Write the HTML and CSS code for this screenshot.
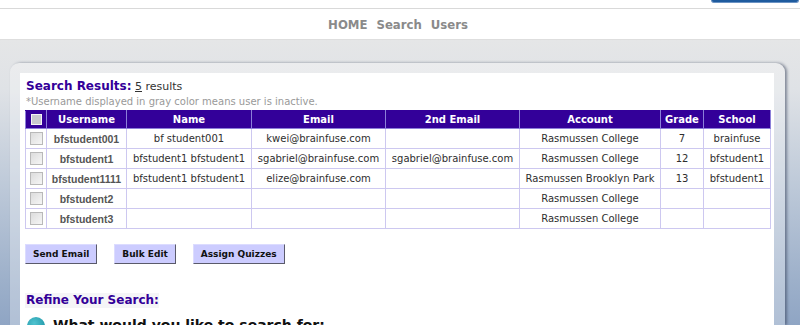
FILE: index.html
```html
<!DOCTYPE html>
<html>
<head>
<meta charset="utf-8">
<link rel="stylesheet" href="styles.css">
</head>
<body>
<div class="topbar"><div class="topbtn"></div></div>
<nav class="nav"><a>HOME</a><a>Search</a><a>Users</a></nav>
<main class="page">
  <section class="panel">
    <div class="inner">
      <div class="results-head"><span class="title">Search Results:</span> <span class="count">5</span> results</div>
      <p class="note">*Username displayed in gray color means user is inactive.</p>
      <table class="results">
        <colgroup>
          <col class="w-cb"><col class="w-user"><col class="w-name"><col class="w-email"><col class="w-email2"><col class="w-acct"><col class="w-grade"><col class="w-school">
        </colgroup>
        <thead>
          <tr><th><span class="cb-head"></span></th><th>Username</th><th>Name</th><th>Email</th><th>2nd Email</th><th>Account</th><th>Grade</th><th>School</th></tr>
        </thead>
        <tbody>
          <tr><td><span class="cb"></span></td><td class="user">bfstudent001</td><td>bf student001</td><td>kwei@brainfuse.com</td><td></td><td>Rasmussen College</td><td>7</td><td>brainfuse</td></tr>
          <tr><td><span class="cb"></span></td><td class="user">bfstudent1</td><td>bfstudent1 bfstudent1</td><td>sgabriel@brainfuse.com</td><td>sgabriel@brainfuse.com</td><td>Rasmussen College</td><td>12</td><td>bfstudent1</td></tr>
          <tr><td><span class="cb"></span></td><td class="user">bfstudent1111</td><td>bfstudent1 bfstudent1</td><td>elize@brainfuse.com</td><td></td><td>Rasmussen Brooklyn Park</td><td>13</td><td>bfstudent1</td></tr>
          <tr><td><span class="cb"></span></td><td class="user">bfstudent2</td><td></td><td></td><td></td><td>Rasmussen College</td><td></td><td></td></tr>
          <tr><td><span class="cb"></span></td><td class="user">bfstudent3</td><td></td><td></td><td></td><td>Rasmussen College</td><td></td><td></td></tr>
        </tbody>
      </table>
      <div class="actions">
        <button class="btn">Send Email</button>
        <button class="btn">Bulk Edit</button>
        <button class="btn">Assign Quizzes</button>
      </div>
      <h2 class="refine">Refine Your Search:</h2>
      <div class="step"><span class="step-icon"></span><span class="step-text">What would you like to search for:</span></div>
    </div>
  </section>
</main>
</body>
</html>
```
FILE: styles.css
```css
html, body {
  margin: 0;
  height: 325px;
  overflow: hidden;
}
body {
  font-family: "DejaVu Sans", Verdana, sans-serif;
  background: #fff;
  color: #333;
}
.topbar {
  height: 8px;
  border-bottom: 1px solid #d9d9d9;
  display: flex;
  justify-content: flex-end;
}
.topbtn {
  width: 86px;
  height: 2px;
  margin-right: 1px;
  background: #1e5b9e;
  border: 1px solid #6b93c4;
  border-top: 0;
  border-radius: 0 0 4px 4px;
}
.nav {
  height: 30px;
  border-bottom: 1px solid #dedede;
  display: flex;
  justify-content: center;
  align-items: center;
  gap: 9px;
  font: bold 13px "DejaVu Sans Condensed", "DejaVu Sans", sans-serif;
  color: #8a8a8a;
  padding-right: 4px;
}
.page {
  height: 285px;
  box-sizing: border-box;
  padding: 23px 15px 0 10px;
  background: linear-gradient(180deg, #e5e6e7 0px, #dfe2e6 50px, #bcc8d8 150px, #9db0ca 240px, #8fa5c4 285px);
}
.panel {
  height: 100%;
  box-sizing: border-box;
  padding: 10px 11px 0 10px;
  border-radius: 9px 9px 0 0;
  background: rgba(255, 255, 255, 0.3);
  box-shadow: 2px 0 3px rgba(50, 60, 85, 0.55);
}
.inner {
  height: 100%;
  box-sizing: border-box;
  background: #fff;
  padding: 6px 4px 0 5px;
}
.results-head {
  font-size: 11px;
  line-height: 15px;
  color: #333;
  padding-left: 1px;
}
.title {
  font-size: 12px;
  font-weight: bold;
  color: #330099;
}
.count {
  text-decoration: underline;
}
.note {
  margin: 2px 0 0;
  font-size: 10px;
  line-height: 12px;
  color: #999;
  padding-left: 1px;
}
.results {
  margin-top: 2px;
  width: 745px;
  table-layout: fixed;
  border-collapse: collapse;
  font-size: 10px;
  text-align: center;
}
.w-cb { width: 21px; }
.w-user { width: 80px; }
.w-name { width: 125px; }
.w-email { width: 134px; }
.w-email2 { width: 134px; }
.w-acct { width: 141px; }
.w-grade { width: 43px; }
.w-school { width: 67px; }
.results th {
  height: 17px;
  padding: 0;
  background: #330099;
  color: #fff;
  font-weight: bold;
  border: 1px solid #8c7fd9;
  border-top-color: #330099;
  white-space: nowrap;
}
.results td {
  height: 19px;
  padding: 0;
  border: 1px solid #cdc8f0;
  color: #2e2e2e;
  white-space: nowrap;
}
.results td.user {
  font: bold 10.5px "Liberation Sans", Arial, sans-serif;
  color: #555;
}
.cb-head {
  display: block;
  margin: 0 auto;
  width: 9px;
  height: 9px;
  border: 1px solid #f4f4f4;
  background: #c9c9cf;
}
.cb {
  display: block;
  margin: 0 auto;
  width: 11px;
  height: 11px;
  border: 1px solid #b9b9b9;
  background: linear-gradient(135deg, #dcdcdc, #f6f6f6);
}
.actions {
  margin-top: 15px;
  display: flex;
  gap: 17px;
}
.btn {
  height: 20px;
  padding: 0 7px;
  background: #ccccff;
  border: 1px solid;
  border-color: #dcdcff #5a5a6a #5a5a6a #dcdcff;
  font: bold 9px "DejaVu Sans", Verdana, sans-serif;
  color: #111;
}
.refine {
  margin: 29px 0 0;
  display: inline-block;
  font-size: 12px;
  line-height: 15px;
  font-weight: bold;
  color: #330099;
  background: #f5f5f7;
  padding-left: 1px;
}
.step {
  margin-top: 9px;
  display: flex;
  align-items: flex-start;
  gap: 8px;
  padding-left: 2px;
}
.step-icon {
  width: 18px;
  height: 18px;
  border-radius: 50%;
  background: radial-gradient(circle at 40% 35%, #4fc3d0, #148a9c);
}
.step-text {
  font-size: 14px;
  font-weight: bold;
  color: #111;
  line-height: 16px;
}
```
